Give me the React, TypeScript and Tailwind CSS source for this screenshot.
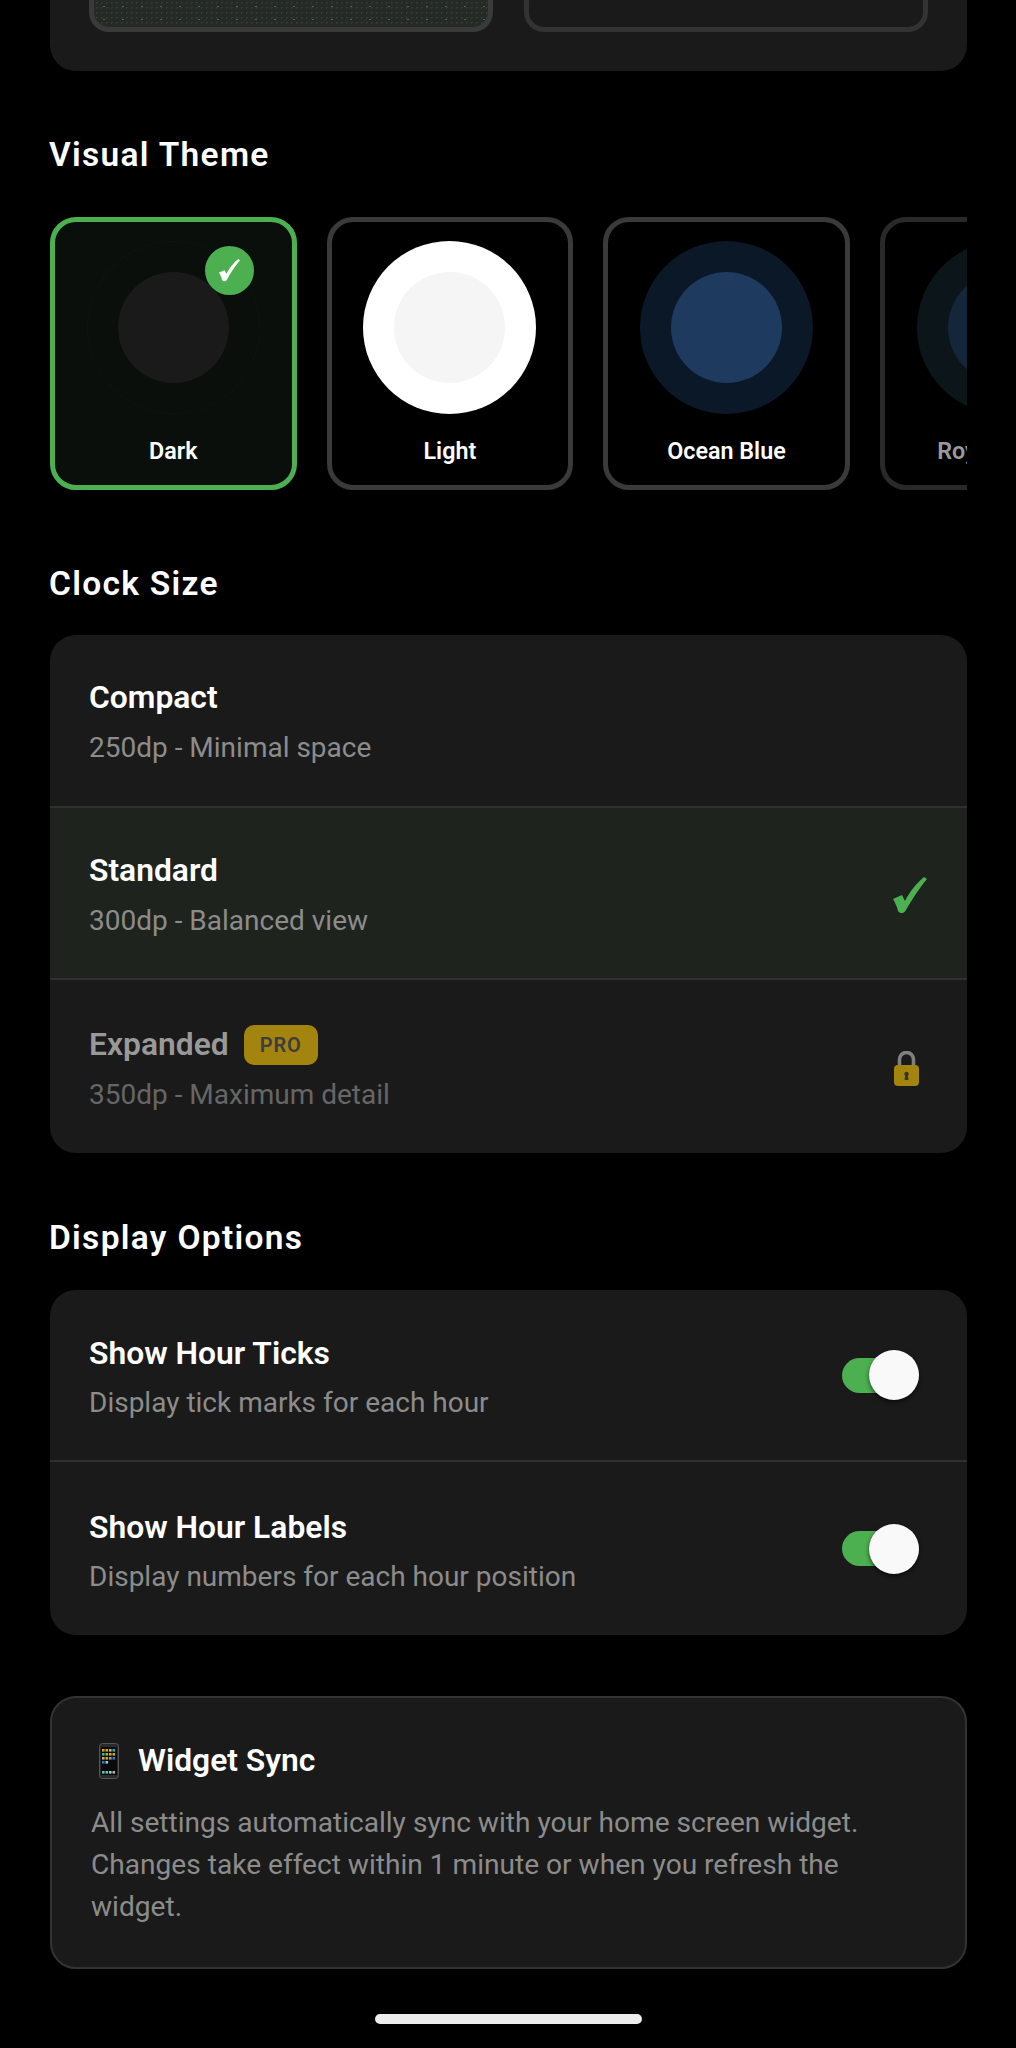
const font = { fontFamily: "Roboto, sans-serif" };

// same hand-drawn tick for the badge and the selected row
function CheckIcon({ size, color }: { size: number; color: string }) {
  return (
    <svg width={size} height={size * 1.06} viewBox="0 0 34 36">
      <path d="M0 22 L9 18 L12 24 C17 14 24 6 31 0 L34 2 C25 13 18 24 13 33 C11 37 7 37 5 34 C4 29 2 26 0 22Z" fill={color} />
    </svg>
  );
}

function PadlockIcon() {
  return (
    <svg width="25" height="35" viewBox="0 0 25 35">
      <path d="M5.5 16V8.5a7 7 0 0 1 14 0V16" fill="none" stroke="#808080" strokeWidth="3.6" />
      <path d="M4 14h17a4 4 0 0 1 4 4v13a4 4 0 0 1-4 4H4a4 4 0 0 1-4-4V18a4 4 0 0 1 4-4z" fill="#a3840f" />
      <circle cx="12.5" cy="23" r="2.2" fill="#3a3222" />
      <path d="M11.5 23h2l1 6h-4z" fill="#3a3222" />
    </svg>
  );
}

function PhoneIcon() {
  const dots = ["#d8a811", "#d8a811", "#c9b36a", "#36a8c4", "#43b5a0", "#8cc152", "#d8a811", "#d8a811", "#c9b36a", "#d8a811", "#9a9a9a", "#2c7bbf", "#2c7bbf", "#8fc9e8"];
  return (
    <svg width="20" height="36" viewBox="0 0 20 36">
      <rect x="0.5" y="0.5" width="19" height="35" rx="3" fill="#2a2a2a" stroke="#555" />
      <rect x="2" y="4" width="16" height="28" fill="#0a0a0a" />
      {dots.map((c, i) => (
        <rect key={i} x={3 + (i % 4) * 3.5} y={6 + Math.floor(i / 4) * 4} width="2.6" height="2.6" fill={c} />
      ))}
      {["#5ec8c0", "#5ec8c0", "#8fd3c8", "#b0b0b0"].map((c, i) => (
        <rect key={i} x={3 + i * 3.5} y={28} width="2.6" height="2.6" fill={c} />
      ))}
    </svg>
  );
}

function ThemeCard({ name, outer, inner, selected, dim }: { name: string; outer: string; inner: string; selected?: boolean; dim?: boolean }) {
  return (
    <div className={`relative flex h-[273px] w-[246.6px] shrink-0 flex-col items-center rounded-[26px] border-[5px] pt-[19px] ${selected ? "border-[#4caf50] bg-[#0a0f0b]" : dim ? "border-[#272a27]" : "border-[#3a3a3a]"}`}>
      <div className={`flex h-[173px] w-[173px] shrink-0 items-center justify-center rounded-full ${outer}`}>
        <div className={`h-[111px] w-[111px] rounded-full ${inner}`} />
      </div>
      {selected && (
        <div className="absolute left-[150px] top-[24px] flex h-[49px] w-[49px] items-center justify-center rounded-full bg-[#4caf50]">
          <CheckIcon size={21} color="#ffffff" />
        </div>
      )}
      <div className={`mt-[22px] whitespace-nowrap text-[23.3px] font-semibold leading-[30px] ${dim ? "text-[#9a9a9a]" : "text-white"}`}>{name}</div>
    </div>
  );
}

function SizeRow({ title, sub, active, locked }: { title: string; sub: string; active?: boolean; locked?: boolean }) {
  return (
    <div className={`flex h-[172.67px] items-center justify-between pl-[39px] pr-[40px] ${active ? "bg-[#1e231e]" : ""}`}>
      <div className="pt-[3px]">
        <div className="flex h-[42px] items-center gap-[15px]">
          <span className={`text-[31.8px] font-semibold ${locked ? "text-[#999999]" : "text-white"}`}>{title}</span>
          {locked && (
            <span className="flex h-[40px] w-[74px] items-center justify-center rounded-[10px] bg-[#a3840f] text-[20px] font-semibold tracking-[0.8px] text-[#3d3d3d]">PRO</span>
          )}
        </div>
        <div className={`mt-[11px] text-[28px] leading-[36px] ${locked ? "text-[#666666]" : "text-[#8c8c8c]"}`}>{sub}</div>
      </div>
      {active && (
        <div className="pt-[4px]">
          <CheckIcon size={34} color="#4caf50" />
        </div>
      )}
      {locked && (
        <div className="pr-[8px] pt-[3px]">
          <PadlockIcon />
        </div>
      )}
    </div>
  );
}

function ToggleRow({ title, sub }: { title: string; sub: string }) {
  return (
    <div className="flex h-[172.5px] items-center justify-between pl-[39px] pr-[48px]">
      <div className="pt-[3px]">
        <div className="h-[42px] text-[31.8px] font-semibold leading-[42px] text-white">{title}</div>
        <div className="mt-[11px] text-[28px] leading-[36px] text-[#8c8c8c]">{sub}</div>
      </div>
      <div className="relative h-[35px] w-[77px] rounded-full bg-[#4caf50]">
        <div className="absolute right-0 top-[-7.5px] h-[50px] w-[50px] rounded-full bg-[#f9f9f9] shadow-[0_2px_4px_rgba(0,0,0,0.6)]" />
      </div>
    </div>
  );
}

function SectionTitle({ children }: { children: string }) {
  return <h2 className="-ml-px text-[33.5px] font-semibold leading-[42px] tracking-[1.3px] text-white">{children}</h2>;
}

export default function App() {
  return (
    <div style={font} className="h-[2048px] w-[1016px] overflow-hidden bg-black pl-[50px] pr-[49px]">
      <div className="flex h-[71px] gap-[31px] rounded-b-[26px] bg-[#1a1a1a] px-[39px]">
        <div className="h-[32px] w-[404px] rounded-b-[20px] border-x-[5px] border-b-[5px] border-[#3a3a3a] bg-[#262a26] bg-[radial-gradient(#2c7a35_1px,transparent_1px),radial-gradient(#333a33_1px,transparent_1px)] bg-[size:19px_13px,5px_5px]" />
        <div className="h-[32px] w-[404px] rounded-b-[20px] border-x-[5px] border-b-[5px] border-[#333333] bg-[#1a1a1a]" />
      </div>

      <div className="mt-[63px]"><SectionTitle>Visual Theme</SectionTitle></div>
      <div className="mt-[41px] flex gap-[30px] overflow-hidden">
        <ThemeCard name="Dark" outer="border border-dotted border-[#141915] bg-[#0a0f0b]" inner="bg-[#1a1a1a]" selected />
        <ThemeCard name="Light" outer="bg-white" inner="bg-[#f5f5f5]" />
        <ThemeCard name="Ocean Blue" outer="bg-[#0a1828]" inner="bg-[#1e3a5f]" />
        <ThemeCard name="Royal Purple" outer="bg-[#0c1519]" inner="bg-[#14263a]" dim />
      </div>

      <div className="mt-[73px]"><SectionTitle>Clock Size</SectionTitle></div>
      <div className="mt-[30px] divide-y-2 divide-[#303030] overflow-hidden rounded-[26px] bg-[#1a1a1a]">
        <SizeRow title="Compact" sub="250dp - Minimal space" />
        <SizeRow title="Standard" sub="300dp - Balanced view" active />
        <SizeRow title="Expanded" sub="350dp - Maximum detail" locked />
      </div>

      <div className="mt-[64px]"><SectionTitle>Display Options</SectionTitle></div>
      <div className="mt-[31px] divide-y-2 divide-[#303030] overflow-hidden rounded-[26px] bg-[#1a1a1a]">
        <ToggleRow title="Show Hour Ticks" sub="Display tick marks for each hour" />
        <ToggleRow title="Show Hour Labels" sub="Display numbers for each hour position" />
      </div>

      <div className="mt-[61px] h-[273px] rounded-[26px] border-2 border-[#333333] bg-[#1a1a1a] pl-[39px] pr-[39px] pt-[43px]">
        <div className="flex h-[40px] items-center gap-[19px] pl-[8px]">
          <PhoneIcon />
          <span className="text-[31.8px] font-semibold text-white">Widget Sync</span>
        </div>
        <p className="mt-[21px] text-[28.1px] leading-[42px] text-[#8c8c8c]">
          All settings automatically sync with your home screen widget. Changes take effect within 1 minute or when you refresh the widget.
        </p>
      </div>

      <div className="mx-auto mt-[45px] h-[10px] w-[267px] rounded-full bg-[#ededed]" />
    </div>
  );
}
